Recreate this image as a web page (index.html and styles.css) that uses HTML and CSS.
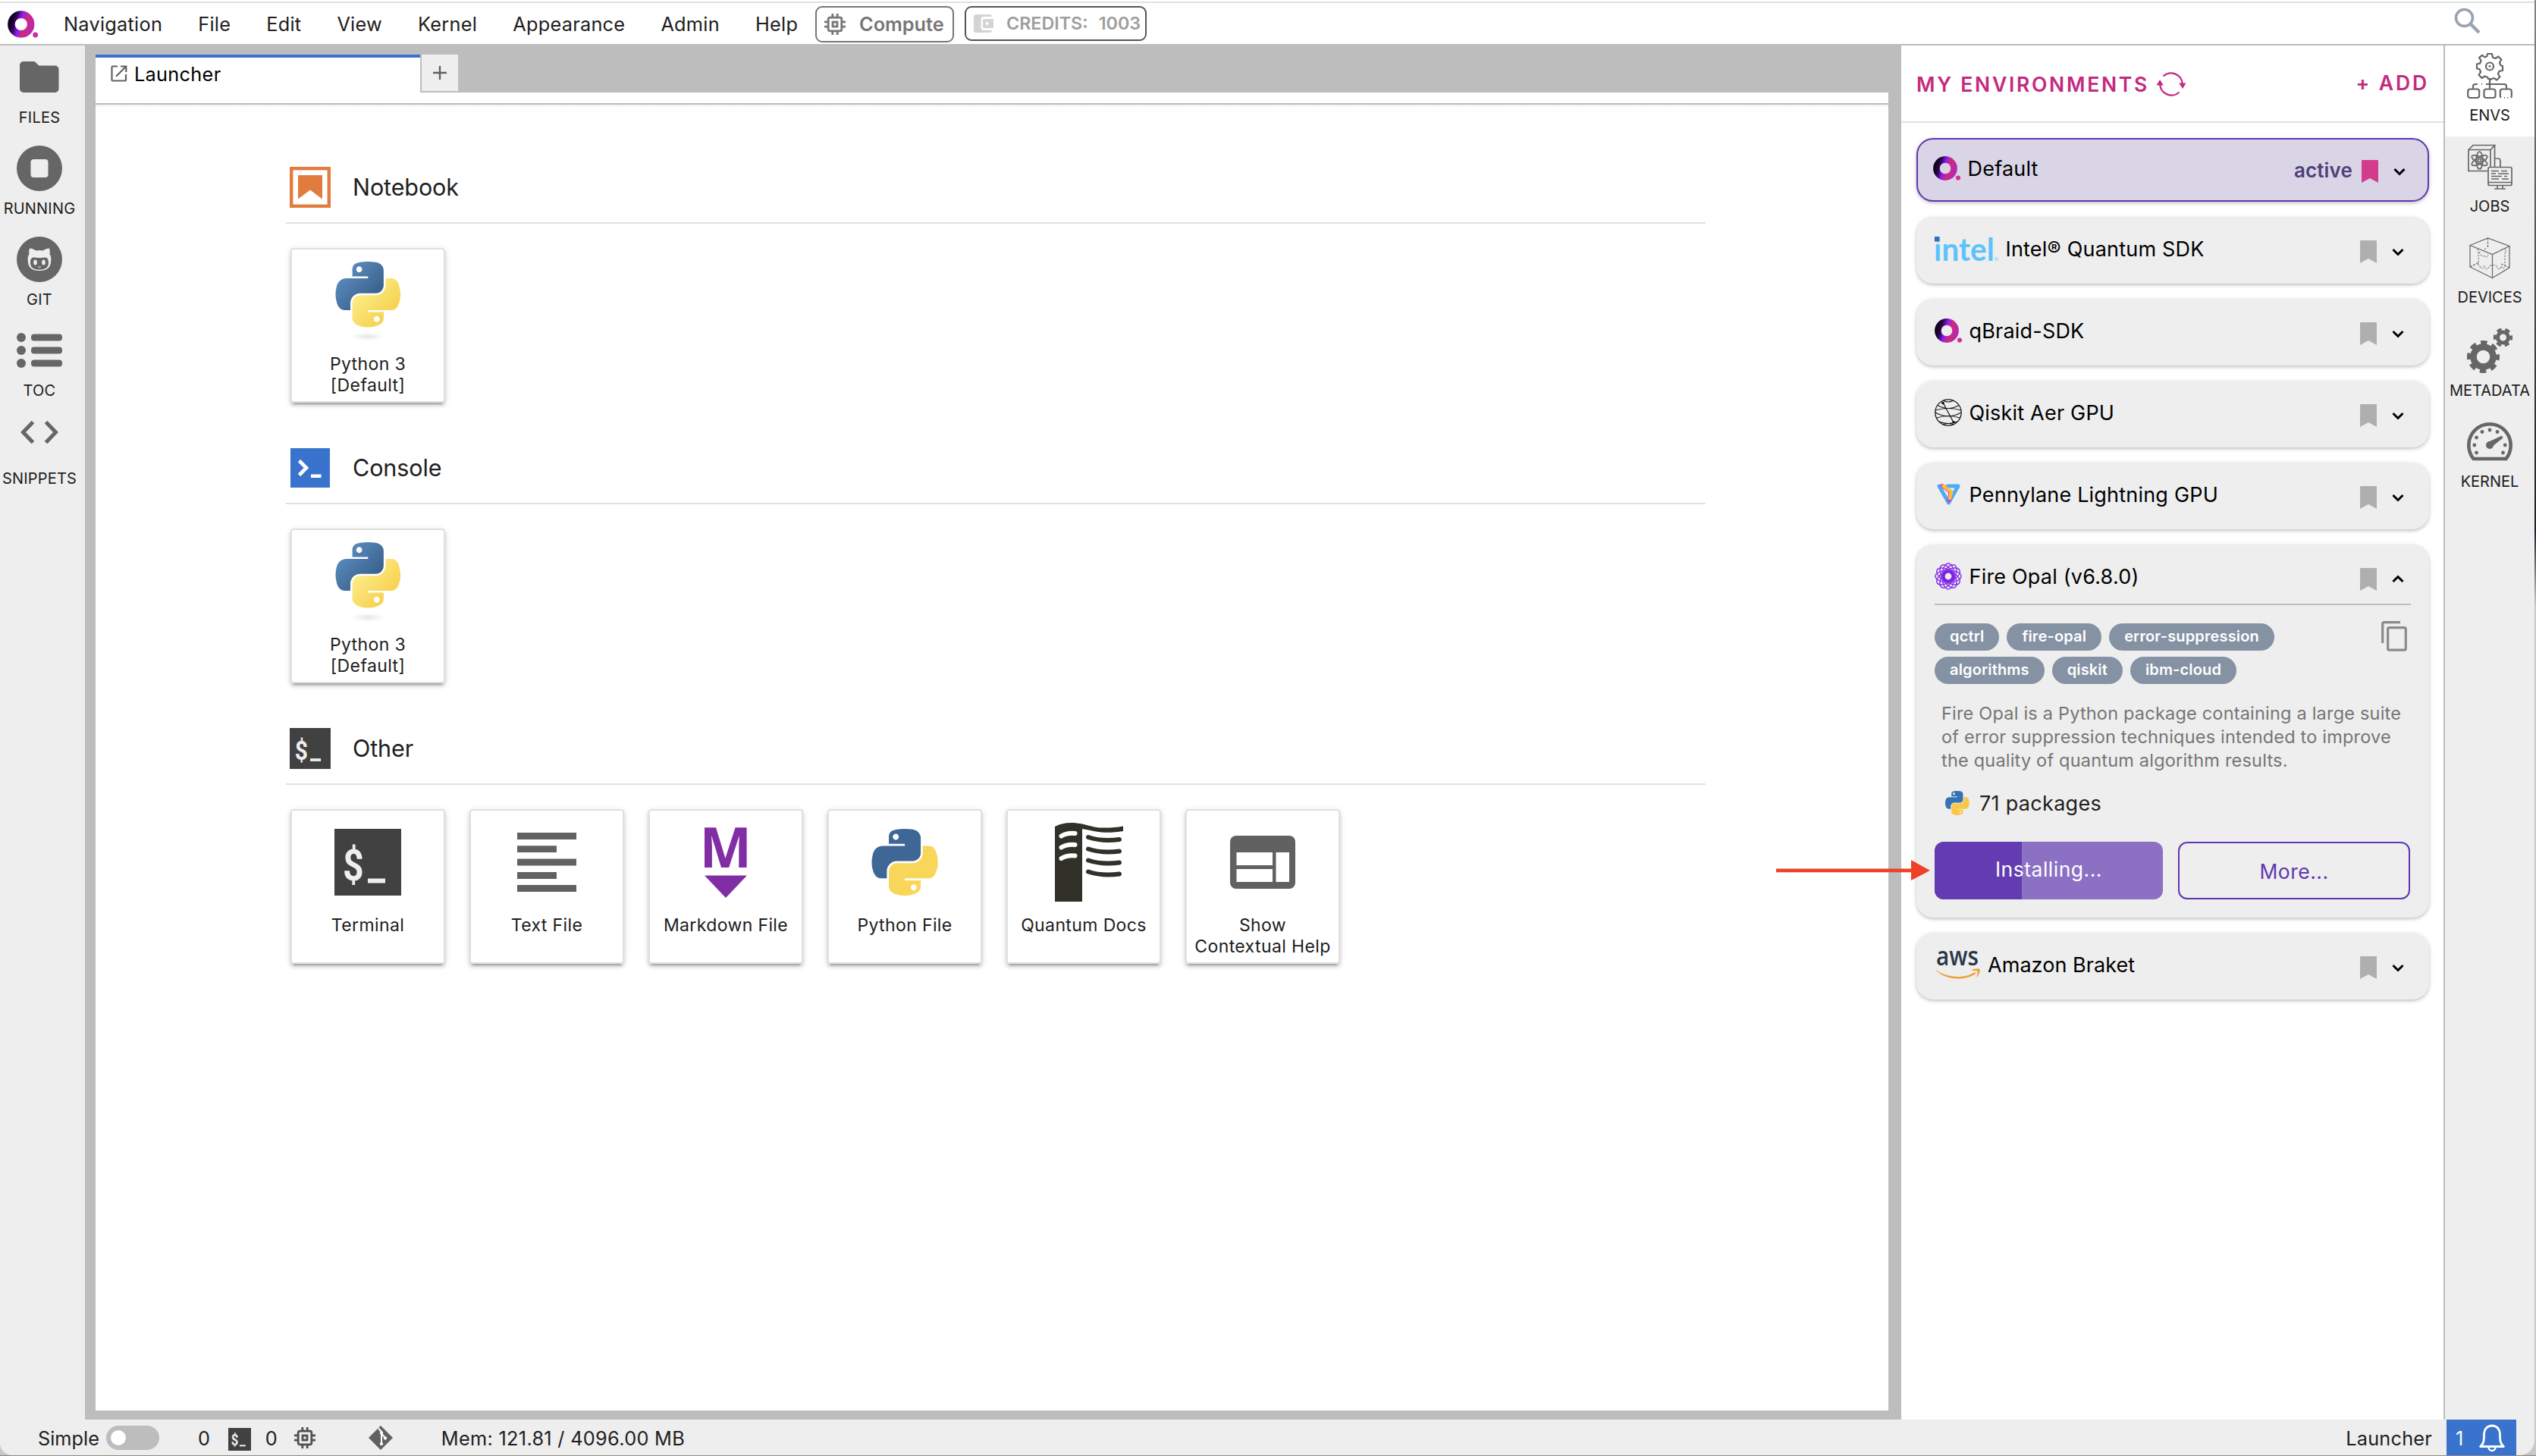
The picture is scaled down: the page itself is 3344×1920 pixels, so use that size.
FILE: index.html
```html
<!DOCTYPE html>
<html lang="en">
<head>
<meta charset="utf-8">
<title>Launcher</title>
<link rel="stylesheet" href="styles.css">
</head>
<body>
<svg class="defs" width="0" height="0" aria-hidden="true">
  <defs>
    <linearGradient id="ring" x1="0" y1="0.3" x2="1" y2="0.6">
      <stop offset="0" stop-color="#12001f"/><stop offset="0.18" stop-color="#2b0350"/><stop offset="0.45" stop-color="#8d1ff0"/><stop offset="0.72" stop-color="#d02a78"/><stop offset="1" stop-color="#bb28a8"/>
    </linearGradient>
    <linearGradient id="pyblue" x1="0" y1="0" x2="0.8" y2="0.8"><stop offset="0.1" stop-color="#5f93c6"/><stop offset="0.9" stop-color="#3d6591"/></linearGradient>
    <linearGradient id="pyyellow" x1="0.1" y1="0.2" x2="0.7" y2="0.8"><stop offset="0.2" stop-color="#fbe983"/><stop offset="1" stop-color="#f7d250"/></linearGradient>
    <radialGradient id="pyshade"><stop offset="0" stop-color="#000" stop-opacity="0.1"/><stop offset="1" stop-color="#000" stop-opacity="0"/></radialGradient>
    <path id="py-a" d="M54.919 0C50.335.022 45.958.413 42.106 1.095 30.76 3.099 28.7 7.295 28.7 15.032V25.25H55.513V28.657H18.638C10.845 28.657 4.022 33.341 1.888 42.251-.574 52.464-.683 58.837 1.888 69.5 3.793 77.439 8.345 83.095 16.138 83.095H25.356V70.845C25.356 61.995 33.013 54.188 42.106 54.188H68.888C76.342 54.188 82.294 48.05 82.294 40.563V15.032C82.294 7.766 76.164 2.307 68.888 1.095 64.282.328 59.502-.02 54.919 0ZM40.419 8.22C43.188 8.22 45.45 10.518 45.45 13.345 45.45 16.161 43.188 18.438 40.419 18.438 37.639 18.438 35.388 16.161 35.388 13.345 35.388 10.518 37.639 8.22 40.419 8.22Z"/>
    <path id="py-b" d="M85.638 28.657V40.563C85.638 49.794 77.811 57.563 68.888 57.563H42.106C34.77 57.563 28.7 63.842 28.7 71.188V96.72C28.7 103.986 35.019 108.26 42.106 110.345 50.593 112.84 58.732 113.291 68.888 110.345 75.638 108.39 82.294 104.457 82.294 96.72V86.501H55.513V83.095H95.7C103.493 83.095 106.396 77.659 109.106 69.501 111.906 61.102 111.787 53.025 109.106 42.251 107.181 34.494 103.503 28.657 95.7 28.657ZM70.575 93.313C73.354 93.313 75.606 95.591 75.606 98.407 75.606 101.234 73.354 103.532 70.575 103.532 67.806 103.532 65.544 101.234 65.544 98.407 65.544 95.591 67.806 93.313 70.575 93.313Z"/>
    <symbol id="qbraid" viewBox="0 0 36 32"><circle cx="16" cy="16" r="11.6" fill="none" stroke="url(#ring)" stroke-width="8.6"/><circle cx="33" cy="28.6" r="3.1" fill="#cf2f9c"/></symbol>
    <symbol id="chip" viewBox="0 0 28 28"><g fill="none" stroke="currentColor"><rect x="5.2" y="5.2" width="17.6" height="17.6" rx="2" stroke-width="2.8"/><rect x="11" y="11" width="6" height="6" stroke-width="2.8"/><path d="M10.8 0v5M17.2 0v5M10.8 23v5M17.2 23v5M0 10.8h5M0 17.2h5M23 10.8h5M23 17.2h5" stroke-width="2.8"/></g></symbol>
    <symbol id="terminal" viewBox="0 0 88 88"><rect width="88" height="88" fill="#414141"/><text x="11" y="68" class="dollar" textLength="28" lengthAdjust="spacingAndGlyphs">$</text><rect x="44" y="65.500" width="23" height="6" fill="#eee"/></symbol>
    <symbol id="bookmark" viewBox="0 0 22 30"><path d="M0 1a1 1 0 0 1 1-1H21a1 1 0 0 1 1 1V30L11 24 0 30Z" fill="currentColor"/></symbol>
    <symbol id="chev" viewBox="0 0 18 18"><path d="M2.500 6 9 12.500 15.500 6" fill="none" stroke="#000" stroke-width="3"/></symbol>
  </defs>
</svg>
<div class="window">
  <header class="menubar">
    <svg class="brand" width="40" height="36"><use href="#qbraid"/></svg>
    <nav class="menu">
      <span>Navigation</span><span>File</span><span>Edit</span><span>View</span><span>Kernel</span><span>Appearance</span><span>Admin</span><span>Help</span>
    </nav>
    <div class="pill compute"><svg width="28" height="28"><use href="#chip"/></svg><span>Compute</span></div>
    <div class="pill credits"><svg width="26" height="24" viewBox="0 0 26 24"><path d="M3 0H21a3 3 0 0 1 3 3H13.500a4 4 0 0 0-4 4V17a4 4 0 0 0 4 4H24a3 3 0 0 1-3 3H3a3 3 0 0 1-3-3V3a3 3 0 0 1 3-3ZM14 6H26V18H14a2 2 0 0 1-2-2V8a2 2 0 0 1 2-2Zm3.500 4a2 2 0 1 0 .1 4 2 2 0 0 0 0-4Z" fill="#d4d4d4" fill-rule="evenodd"/></svg><span>CREDITS:</span><span class="amount">1003</span></div>
    <svg class="search" width="36" height="36" viewBox="0 0 36 36"><g fill="none" stroke="#98a4b0"><circle cx="13.500" cy="13.500" r="11" stroke-width="3.6"/><path d="M21.500 21.500 33 33" stroke-width="4.4"/></g></svg>
  </header>
  <div class="workspace">
    <aside class="rail left">
      <div class="rail-item"><div class="rail-icon"><svg width="52" height="42" viewBox="0 0 52 42"><path d="M5 0H19.500L25.500 5.500H46.500a5 5 0 0 1 5 5V36a5 5 0 0 1-5 5H5a5 5 0 0 1-5-5V5a5 5 0 0 1 5-5Z" fill="#666"/></svg></div><span>FILES</span></div>
      <div class="rail-item"><div class="rail-icon"><svg width="60" height="60"><circle cx="30" cy="30" r="30" fill="#666"/><rect x="18.500" y="18" width="23" height="24" rx="4" fill="#eee"/></svg></div><span>RUNNING</span></div>
      <div class="rail-item"><div class="rail-icon"><svg width="60" height="60"><circle cx="30" cy="30" r="30" fill="#666"/><path d="M17 15.500c3 0 6.500 1.700 8.500 3q4.500-.8 9 0c2-1.300 5.500-3 8.500-3 1 3 .9 5.500.4 7.500 1.700 2.300 2.100 4.700 1.900 8C45 40 41 45 30 45S15 40 14.700 31c-.2-3.300.2-5.700 1.900-8-.5-2-.6-4.500.4-7.500Z" fill="#eee"/><path d="M24 27.500q6 1 12 0c4-.6 6 1.500 6 6.500 0 7-4 9.500-12 9.500s-12-2.500-12-9.500c0-5 2-7.100 6-6.500Z" fill="#666"/><ellipse cx="24.500" cy="34" rx="2.300" ry="3.600" fill="#eee"/><ellipse cx="35.500" cy="34" rx="2.300" ry="3.600" fill="#eee"/><path d="M28 39.500q2 2 4 0" stroke="#eee" fill="none"/></svg></div><span>GIT</span></div>
      <div class="rail-item"><div class="rail-icon"><svg width="60" height="46"><g fill="#666"><circle cx="6" cy="6" r="6"/><circle cx="6" cy="23" r="6"/><circle cx="6" cy="40" r="6"/><rect x="19" y="1.500" width="41" height="9" rx="4"/><rect x="19" y="18.500" width="41" height="9" rx="4"/><rect x="19" y="35.500" width="41" height="9" rx="4"/></g></svg></div><span>TOC</span></div>
      <div class="rail-item raised"><div class="rail-icon"><svg width="50" height="30" viewBox="0 0 50 30"><path d="M16.500 1.500 3.500 15l13 13.500M33.500 1.500 46.500 15l-13 13.500" fill="none" stroke="#666" stroke-width="5"/></svg></div><span>SNIPPETS</span></div>
    </aside>
    <main class="dock">
      <div class="tabbar">
        <div class="tab"><svg width="22" height="22" viewBox="0 0 22 22"><g fill="none" stroke="#616161" stroke-width="2.200"><path d="M9 1.500H2.500a1 1 0 0 0-1 1V19.500a1 1 0 0 0 1 1H19a1 1 0 0 0 1-1V12"/><path d="M13 1.500H20.300V9M20 1.800 7 14.800"/></g></svg><span>Launcher</span></div>
        <div class="newtab"><svg width="20" height="20"><path d="M10 1V19M1 10H19" stroke="#616161" stroke-width="2.400"/></svg></div>
      </div>
      <div class="tabfoot"></div>
      <div class="launcher">
        <section>
          <h2><svg width="54" height="54"><rect x="2.200" y="2.200" width="49.600" height="49.600" fill="#fff" stroke="#e27c3e" stroke-width="4.400"/><path d="M11 11H43V42.500L27 30.500 11 42.500Z" fill="#e27c3e"/></svg><span>Notebook</span></h2>
          <div class="cards"><div class="card"><div class="art"><svg width="88" height="112" viewBox="0 0 88 112"><g transform="translate(1.500 4) scale(.77)"><use href="#py-a" fill="url(#pyblue)"/><use href="#py-b" fill="url(#pyyellow)"/></g><ellipse cx="44" cy="103" rx="22" ry="5.500" fill="url(#pyshade)"/></svg></div><p>Python 3<br>[Default]</p></div></div>
        </section>
        <section>
          <h2><svg width="54" height="54"><rect x="1" y="1" width="52" height="52" fill="#3973cd"/><path d="M12.500 17.500 22 27l-9.500 9.500" fill="none" stroke="#fff" stroke-width="4.600"/><rect x="28" y="35.500" width="13.500" height="4.500" fill="#fff"/></svg><span>Console</span></h2>
          <div class="cards"><div class="card"><div class="art"><svg width="88" height="112" viewBox="0 0 88 112"><g transform="translate(1.500 4) scale(.77)"><use href="#py-a" fill="url(#pyblue)"/><use href="#py-b" fill="url(#pyyellow)"/></g><ellipse cx="44" cy="103" rx="22" ry="5.500" fill="url(#pyshade)"/></svg></div><p>Python 3<br>[Default]</p></div></div>
        </section>
        <section>
          <h2><svg width="54" height="54"><use href="#terminal"/></svg><span>Other</span></h2>
          <div class="cards">
            <div class="card"><div class="art"><svg width="88" height="88"><use href="#terminal"/></svg></div><p>Terminal</p></div>
            <div class="card"><div class="art"><svg width="78" height="78"><path d="M0 0H78V9H0ZM0 17.200H52V26H0ZM0 34.500H78V43.500H0ZM0 52H52V61H0ZM0 69H78V78H0Z" fill="#616161"/></svg></div><p>Text File</p></div>
            <div class="card"><div class="art"><svg width="60" height="94"><text x="-4.500" y="54" class="md" textLength="69" lengthAdjust="spacingAndGlyphs">M</text><path d="M2 64.500H58L30 94Z" fill="#812da4"/></svg></div><p>Markdown File</p></div>
            <div class="card"><div class="art"><svg width="88" height="90" viewBox="0 0 88 90"><g transform="translate(.5 1) scale(.785)"><use href="#py-a" fill="#3f6795"/><use href="#py-b" fill="#f8d65a"/></g></svg></div><p>Python File</p></div>
            <div class="card"><div class="art"><svg class="docs" width="90" height="104" viewBox="0 0 90 104"><path d="M0 5C10-1 24-1 36 1.500 48 4.500 55 7 66 6.500 75 6.500 82 6 90 4.500V11C78 13 65 13.500 54 11.500 47 10 41 9 36 8V104H0Z" fill="#31312a"/><g fill="none" stroke-linecap="round" stroke-width="6"><path stroke="#fff" d="M8.500 17.500q8-4.500 18-3.500M8.500 32.500q8-4.500 18-3.500M8.500 47q8-4.500 18-3.500"/><path stroke="#31312a" d="M44 19q18 6 41 3M44 34.500q18 6 41 3M44 49.500q18 6 41 3M44 64.500q18 6 41 3"/></g></svg></div><p>Quantum Docs</p></div>
            <div class="card"><div class="art"><svg width="86" height="70"><rect width="86" height="70" rx="8" fill="#616161"/><path d="M8.500 22H56V39H8.500ZM8.500 44H56V61H8.500ZM60.500 22H78V61H60.500Z" fill="#fff"/></svg></div><p>Show<br>Contextual Help</p></div>
          </div>
        </section>
      </div>
    </main>
    <aside class="envs">
      <div class="envs-head"><h1>MY ENVIRONMENTS</h1><svg class="refresh" width="40" height="34" viewBox="0 0 40 34"><g fill="none" stroke="#c42a80" stroke-width="2.400"><path d="M9.500 6.500A15 15 0 0 1 34.800 17M30.500 27.500A15 15 0 0 1 5.200 17"/></g><path d="M30.200 15.500H39.500L35 23ZM.500 18.500H9.800L5 11Z" fill="#c42a80"/></svg><b>+ ADD</b></div>
      <div class="env-list">
        <div class="env active"><div class="env-head"><div class="name"><svg width="36" height="32"><use href="#qbraid"/></svg><span>Default</span></div><div class="tools"><b>active</b><svg class="bm" width="22" height="30"><use href="#bookmark"/></svg><svg width="18" height="18"><use href="#chev"/></svg></div></div></div>
        <div class="env"><div class="env-head"><div class="name"><svg width="84" height="36" viewBox="0 0 84 36"><text x="-1" y="34" class="intel" textLength="80" lengthAdjust="spacingAndGlyphs">intel</text><rect width="7" height="9" fill="#eee"/><rect y="2" width="6.500" height="6.500" fill="#2f6cc4"/><circle cx="81.500" cy="31.500" r="1.800" fill="none" stroke="#5fc3f8" stroke-width=".8"/></svg><span>Intel® Quantum SDK</span></div><div class="tools"><svg class="bm" width="22" height="30"><use href="#bookmark"/></svg><svg width="18" height="18"><use href="#chev"/></svg></div></div></div>
        <div class="env"><div class="env-head"><div class="name"><svg width="36" height="32"><use href="#qbraid"/></svg><span>qBraid-SDK</span></div><div class="tools"><svg class="bm" width="22" height="30"><use href="#bookmark"/></svg><svg width="18" height="18"><use href="#chev"/></svg></div></div></div>
        <div class="env"><div class="env-head"><div class="name"><svg width="36" height="36" viewBox="0 0 36 36"><g fill="none" stroke="#111" stroke-width="1.200"><circle cx="18" cy="18" r="17.200"/><path d="M4 8.500q14 8 28 0M1 15q17 -5 34 0M1 18q17 9.500 34 0M3 25q15-5 30 0M6 30q12 5 24 0M12 2.500q6 3 12 0M11 34q7-3 14 0M11 5 25 31"/></g><circle cx="11" cy="5.500" r="1.800"/><circle cx="25" cy="30.500" r="1.600"/></svg><span>Qiskit Aer GPU</span></div><div class="tools"><svg class="bm" width="22" height="30"><use href="#bookmark"/></svg><svg width="18" height="18"><use href="#chev"/></svg></div></div></div>
        <div class="env"><div class="env-head"><div class="name"><svg width="36" height="28" viewBox="0 0 36 28"><g fill="none" stroke-linejoin="round" stroke-linecap="round"><path d="M6 3 18.500 25 31 3H17" stroke="#4dabf7" stroke-width="5"/><path d="M10 2.500 21 10.500 19 22" stroke="#d63bd0" stroke-width="5"/><path d="M11.500 3 22 10.500 20 19" stroke="#fbc02d" stroke-width="4.500"/></g></svg><span>Pennylane Lightning GPU</span></div><div class="tools"><svg class="bm" width="22" height="30"><use href="#bookmark"/></svg><svg width="18" height="18"><use href="#chev"/></svg></div></div></div>
        <div class="env open">
          <div class="env-head"><div class="name"><svg width="36" height="36" viewBox="-18 -18 36 36"><g fill="none" stroke="#8a35e8" stroke-width="1.500"><ellipse rx="17" ry="8"/><ellipse rx="17" ry="8" transform="rotate(30)"/><ellipse rx="17" ry="8" transform="rotate(60)"/><ellipse rx="17" ry="8" transform="rotate(90)"/><ellipse rx="17" ry="8" transform="rotate(120)"/><ellipse rx="17" ry="8" transform="rotate(150)"/><circle r="6.200" stroke-width="3.600" stroke="#7a22dd"/></g><circle r="3.500" fill="#eee"/></svg><span>Fire Opal (v6.8.0)</span></div><div class="tools"><svg class="bm" width="22" height="30"><use href="#bookmark"/></svg><svg class="up" width="18" height="18"><use href="#chev"/></svg></div></div>
          <div class="env-body">
            <div class="tagrow">
              <div class="tags"><span class="tag">qctrl</span><span class="tag">fire-opal</span><span class="tag">error-suppression</span><span class="tag">algorithms</span><span class="tag">qiskit</span><span class="tag">ibm-cloud</span></div>
              <svg class="copy" width="34" height="40" viewBox="0 0 34 40"><path d="M1.700 29V4a2.300 2.300 0 0 1 2.300-2.300H25" fill="none" stroke="#8a8a8a" stroke-width="3.200"/><rect x="8.700" y="8.700" width="23.600" height="29.500" rx="2" fill="none" stroke="#8a8a8a" stroke-width="3.200"/></svg>
            </div>
            <p class="desc">Fire Opal is a Python package containing a large suite<br>of error suppression techniques intended to improve<br>the quality of quantum algorithm results.</p>
            <div class="packages"><svg width="32" height="32" viewBox="0 0 112 112"><use href="#py-a" fill="#3474b4"/><use href="#py-b" fill="#fac748"/></svg><span>71 packages</span></div>
            <div class="buttons"><div class="btn solid"><i style="width:38.200%"></i><span>Installing...</span></div><div class="btn outline"><span>More...</span></div></div>
          </div>
        </div>
        <div class="env"><div class="env-head"><div class="name braket"><svg width="60" height="38" viewBox="0 0 60 38"><text x="2" y="20" class="aws" textLength="56" lengthAdjust="spacingAndGlyphs">aws</text><path d="M0 25C16 37 39 38 53 29L54.500 31C39 41 14 40 0 25Z" fill="#f29d38"/><path d="M48 26.500C52 24 58 23.500 59.500 25 60.500 27.500 58.500 33 55.500 36 56 32 57 29.500 56.500 27.800 55 26.800 51 27 48 26.500Z" fill="#f29d38"/></svg><span>Amazon Braket</span></div><div class="tools"><svg class="bm" width="22" height="30"><use href="#bookmark"/></svg><svg width="18" height="18"><use href="#chev"/></svg></div></div></div>
      </div>
    </aside>
    <aside class="rail right">
      <div class="rail-item selected raised"><div class="rail-icon"><svg width="60" height="60" viewBox="0 0 60 60"><g fill="none" stroke="#666" stroke-width="2.200"><path d="M27 1h6l.8 4.500 3.700 1.600L41.300 4.500l4.200 4.200-2.600 3.800 1.600 3.700L47 17v6l-4.500.8-1.600 3.700 2.600 3.800-4.200 4.200-3.800-2.600-3.700 1.600L32 34h-4l-.8-2-3.700-1.600-3.800 2.600-4.200-4.200 2.600-3.800L16.500 21 13 20.500v-6l4-.8 1.600-3.700-2.600-3.800L20 2.800l3.500 2.600 2.700-1.200Z" stroke-linejoin="round"/><circle cx="30" cy="17.500" r="5"/><path d="M30 34V47M8 47v-3a3 3 0 0 1 3-3h3M19 41h1M25 41H49a3 3 0 0 1 3 3v3"/><rect x="1.200" y="47.500" width="15" height="11.500" rx="3"/><rect x="22.500" y="47.500" width="15" height="11.500" rx="3"/><path d="M45 58.500a2 2 0 0 1-1.200-2V50.500a3 3 0 0 1 3-3h9a3 3 0 0 1 3 3v6a2 2 0 0 1-1.200 2M49 59h1M53 59h1"/></g><circle cx="30" cy="17.500" r="1.400" fill="#666"/></svg></div><span>ENVS</span></div>
      <div class="rail-item raised"><div class="rail-icon"><svg width="60" height="60" viewBox="0 0 60 60"><g fill="none" stroke="#666" stroke-width="1.700"><path d="M27 35.500H2V7.500H31V30M2 7.500 8 1.500H36.500L31 7.500M36.500 1.500V30M36 19h5a3 3 0 0 1 3 3v8"/><ellipse cx="16.500" cy="21.500" rx="11.500" ry="4.300" transform="rotate(30 16.500 21.500)"/><ellipse cx="16.500" cy="21.500" rx="11.500" ry="4.300" transform="rotate(90 16.500 21.500)"/><ellipse cx="16.500" cy="21.500" rx="11.500" ry="4.300" transform="rotate(150 16.500 21.500)"/><circle cx="16.500" cy="21.500" r="2.200"/><rect x="28" y="30.500" width="31" height="24" rx="2"/><path d="M28 50.500H59M40 54.500v4M47 54.500v4M36 59H51M32 35.500H42M45 35.500H53M32 39H38M41 39H55M32 42.500H46M49 42.500H53M32 46H42M46 46H55"/></g></svg></div><span>JOBS</span></div>
      <div class="rail-item raised"><div class="rail-icon"><svg width="54" height="54" viewBox="0 0 54 54"><g fill="none" stroke="#666" stroke-width="1.200"><path d="M1 10.500 24.500 1 53 11.500 30.500 22.500ZM1 10.500V39L30.500 53.500V22.500M53 11.500V40L30.500 53.500"/><path d="M24.500 1V14M1 39 13 33M53 40 42 35" stroke-dasharray="3 1.500"/><path d="M11 15q2 10 1 23M13 19q3 8 8 5 2 4 4-1M14 38q2 6 6 0 3 8 6 0 8-3 10 0 3 8 6 0 3 6 5 0V20M42 16l6-1v6M20 16l3-2" stroke-dasharray="2.500 1.500" stroke="#888"/></g></svg></div><span>DEVICES</span></div>
      <div class="rail-item"><div class="rail-icon"><svg width="60" height="60" viewBox="0 0 60 60"><g fill="none" stroke="#666"><circle cx="21.500" cy="38.500" r="13" stroke-width="8.500"/><circle cx="21.500" cy="38.500" r="19" stroke-width="5" stroke-dasharray="8.500 6.423" stroke-dashoffset="4"/><circle cx="47.500" cy="13" r="7" stroke-width="5"/><circle cx="47.500" cy="13" r="10.800" stroke-width="3.600" stroke-dasharray="6.300 5.010" stroke-dashoffset="3"/></g></svg></div><span>METADATA</span></div>
      <div class="rail-item"><div class="rail-icon"><svg width="60" height="50" viewBox="0 0 60 50"><path d="M8.500 48C4.500 43 2.300 37 2.300 30a27.700 27.700 0 0 1 55.400 0C57.700 37 55.500 43 51.500 48Z" fill="none" stroke="#666" stroke-width="4.600" stroke-linejoin="round"/><path d="M26.500 26.500 46 17.500l1.500 3L33 32Z" fill="#666"/><g fill="#666"><circle cx="30" cy="30" r="5"/><circle cx="30" cy="10" r="2.400"/><circle cx="20" cy="12.500" r="2.400"/><circle cx="40" cy="12.500" r="2.400"/><circle cx="12.500" cy="20" r="2.400"/><circle cx="9.800" cy="30" r="2.400"/><circle cx="50.200" cy="30" r="2.400"/><circle cx="12.500" cy="40" r="2.400"/><circle cx="47.500" cy="40" r="2.400"/></g></svg></div><span>KERNEL</span></div>
    </aside>
  </div>
  <footer class="status">
    <span>Simple</span><i class="toggle"></i>
    <span class="n1">0</span><svg class="term" width="30" height="30"><use href="#terminal"/></svg><span class="n2">0</span>
    <svg class="chip" width="28" height="28"><use href="#chip"/></svg>
    <svg class="git" width="32" height="32" viewBox="0 0 32 32"><path d="M16 0 32 16 16 32 0 16Z" fill="#616161"/><g stroke="#fff" fill="#fff"><path d="M13 3.500 17 8V24M17 10.500 22 16" stroke-width="2" fill="none"/><circle cx="17" cy="9.500" r="1.700"/><circle cx="22" cy="16.500" r="1.700"/><circle cx="17" cy="24" r="1.700"/></g></svg>
    <span class="mem">Mem: 121.81 / 4096.00 MB</span>
    <span class="current">Launcher</span>
    <div class="bell"><span>1</span><svg width="34" height="36" viewBox="0 0 34 36"><path d="M1.500 29.500C6 26 6.500 22 6.500 14.500 6.500 6 11 2 17 2S27.500 6 27.500 14.500C27.500 22 28 26 32.500 29.500Z" fill="none" stroke="#fff" stroke-width="2.800" stroke-linejoin="round"/><path d="M12.500 30.500a4.500 4.500 0 0 0 9 0" fill="none" stroke="#fff" stroke-width="2.400"/></svg></div>
  </footer>
  <svg class="pointer" width="204" height="28" viewBox="0 0 204 28"><path d="M0 11.500H178V0L203 13.800 178 27V16.300H0Z" fill="#ee4126"/></svg>
</div>
</body>
</html>
```
FILE: styles.css
```css
* { box-sizing: border-box; }
body { margin: 0; background: linear-gradient(#8a8478 0, #3a3a34 500px, #1a2230 700px, #c9c9c9 800px, #c9c9c9 100%); font-family: Inter, "Liberation Sans", sans-serif; font-size: 25.300px; color: #202020; }
h1, h2, p { margin: 0; font-weight: 400; }
svg { display: block; flex: none; overflow: visible; }
span, b { white-space: nowrap; }
.defs { position: absolute; }
.window { position: relative; width: 3342px; height: 1919px; display: flex; flex-direction: column; background: #eee; border-radius: 0 0 20px 16px; overflow: hidden; }
.dollar { font: 700 58px Roboto, sans-serif; fill: #eee; }
.md { font: 700 73px "Open Sans", sans-serif; fill: #812da4; }
.intel { font: 700 42px Lato, sans-serif; fill: #5bc3fa; }
.aws { font: 600 35px "Open Sans", sans-serif; fill: #2b3648; }

.menubar { height: 60px; flex: none; display: flex; align-items: center; background: linear-gradient(#fff 2px, #e0e0e0 2px, #e0e0e0 4px, #fff 4px); border-bottom: 2px solid #bdbdbd; padding: 5px 70px 0 10px; }
.menu { display: flex; gap: 47px; margin-left: 34px; width: 990px; flex: none; letter-spacing: .27px; }
.pill { display: flex; align-items: center; border: 2px solid #767676; border-radius: 9px; height: 48px; width: 183px; padding-left: 10px; gap: 18px; color: #767676; font-weight: 600; margin-left: 1px; }
.credits { height: 46px; width: 240px; margin: -1px 0 0 14px; border-color: #555; color: #9e9e9e; gap: 17px; font-size: 23.300px; }
.credits span { margin-top: -1px; }
.credits .amount { margin-left: -3px; }
.search { margin: -8px 0 0 auto; }

.workspace { height: 1812px; flex: none; display: flex; }
.rail { flex: none; background: #eee; font-size: 20px; }
.left { width: 112px; letter-spacing: .2px; }
.right { width: 120px; border-left: 2px solid #bdbdbd; }
.rail-item { height: 120px; display: flex; flex-direction: column; align-items: center; padding-top: 12px; }
.left .rail-item { padding-right: 8px; }
.rail-icon { width: 60px; height: 60px; display: flex; align-items: center; justify-content: center; margin-bottom: 11px; }
.rail-item span { line-height: 24px; }
.right .raised { padding-top: 10px; }
.right .raised .rail-icon { margin-bottom: 10px; }
.left .raised { padding-top: 0; }
.left .raised .rail-icon { margin-bottom: 19px; }
.selected { background: #fff; }

.dock { width: 2395px; flex: none; background: #bdbdbd; padding: 12px 17px 12px 14px; display: flex; flex-direction: column; }
.tabbar { height: 50px; display: flex; flex: none; }
.tab { width: 428px; background: #fff; border-top: 4px solid #3973cd; display: flex; align-items: flex-start; gap: 9px; padding: 10px 0 0 20px; color: #000; line-height: 24px; letter-spacing: .3px; }
.newtab { width: 50px; height: 50px; background: #eee; border: solid #bdbdbd; border-width: 0 0 2px 2px; display: flex; align-items: center; justify-content: center; }
.tabfoot { height: 16px; flex: none; background: #fff; border-bottom: 2px solid #bdbdbd; }
.launcher { flex: 1; background: linear-gradient(#f0f0f0, #fff 4px); padding: 63px 241px 0 251px; }
section { height: 370px; }
h2 { height: 94px; border-bottom: 2px solid #e0e0e0; display: flex; align-items: center; gap: 29px; padding-left: 5px; font-size: 30.500px; line-height: 36px; letter-spacing: -.1px; }
.cards { display: flex; gap: 32px; padding: 32px 0 0 6px; }
.card { width: 204px; height: 204px; border: 2px solid #e0e0e0; border-radius: 4px; background: #fff; box-shadow: 0 6px 2px -4px rgba(0,0,0,.2), 0 4px 4px 0 rgba(0,0,0,.14), 0 2px 10px 0 rgba(0,0,0,.12); text-align: center; font-size: 23px; line-height: 28px; letter-spacing: .38px; }
.art { height: 136px; display: flex; align-items: center; justify-content: center; margin-bottom: 1px; }
.docs { margin-left: 14px; }

.envs { width: 715px; flex: none; background: #fff; }
.envs-head { height: 102px; border-bottom: 2px solid #e0e0e0; display: flex; align-items: center; padding: 2px 19px 0 20px; color: #c42a80; }
.envs-head h1 { font-size: 26.500px; font-weight: 600; letter-spacing: 2.740px; margin-top: -1px; }
.envs-head b { font-size: 26.500px; font-weight: 600; letter-spacing: 2.900px; margin: -5px 0 0 auto; }
.refresh { margin-left: 9px; }
.env-list { display: flex; flex-direction: column; gap: 20px; padding: 20px 19px 0 20px; }
.env { border-radius: 22px; background: #eee; box-shadow: 0 2px 4px rgba(0,0,0,.2), 0 1px 8px rgba(0,0,0,.06); font-size: 27px; color: #000; }
.env-head { height: 88px; display: flex; justify-content: space-between; padding: 0 32px 0 24px; }
.name { display: flex; align-items: center; gap: 9.500px; margin-bottom: 4px; letter-spacing: .2px; }
.braket { gap: 10px; letter-spacing: .05px; }
.tools { display: flex; align-items: center; gap: 19px; margin-top: 4px; color: #afafaf; }
.up { transform: scaleY(-1); }
.active { background: #d9d4e6; border: 2px solid #5f38b0; }
.active .env-head { height: 80px; padding: 0 28px 0 20px; }
.active b { color: #4f3f78; font-weight: 600; font-size: 26px; letter-spacing: .15px; margin: -3px -7px 0 0; }
.active .bm { color: #d23c8b; }
.env-body { height: 414px; margin: -10px 24px 0; border-top: 2px solid #bdbdbd; padding-top: 23px; }
.tagrow { display: flex; justify-content: space-between; align-items: flex-start; padding-right: 5px; }
.copy { margin-top: -2px; }
.tags { display: flex; flex-wrap: wrap; gap: 8px 10px; width: 460px; margin-top: 1px; }
.tag { height: 36px; line-height: 34px; border-radius: 18px; background: #8492a4; color: #fff; font-size: 20px; font-weight: 600; letter-spacing: .15px; padding: 0 20px; }
.desc { margin: 23px 0 0 9px; font-size: 23.500px; line-height: 31px; letter-spacing: .2px; color: #757575; }
.packages { display: flex; align-items: center; gap: 13px; margin: 24px 0 0 14px; height: 34px; color: #202020; letter-spacing: .3px; }
.buttons { display: flex; gap: 20px; margin-top: 34px; }
.btn { height: 76px; border-radius: 12px; display: flex; align-items: center; justify-content: center; font-size: 26.500px; letter-spacing: .5px; }
.solid { position: relative; width: 301px; background: #8b70c3; color: #fff; overflow: hidden; padding-bottom: 4px; }
.solid i { position: absolute; left: 0; top: 0; bottom: 0; background: #623cb0; }
.solid span { position: relative; }
.outline { width: 306px; border: 2px solid #5e37b0; color: #5e37b0; padding-top: 1px; }

.status { flex: 1; display: flex; align-items: center; padding: 0 0 0 50px; }
.toggle { width: 70px; height: 32px; border-radius: 16px; background: #bdbdbd; padding: 6px; margin-left: 9px; }
.toggle::before { content: ""; display: block; width: 20px; height: 20px; border-radius: 50%; background: #fff; }
.n1 { margin-left: 51px; }
.term { margin-left: 24px; margin-top: 4px; }
.n2 { margin-left: 19px; }
.chip { margin-left: 22px; color: #505050; }
.git { margin-left: 70px; }
.mem { margin-left: 64px; letter-spacing: .3px; }
.current { margin-left: auto; margin-right: 19px; letter-spacing: .2px; }
.bell { width: 92px; height: 48px; background: #3973cd; color: #fff; margin-right: 24px; display: flex; align-items: center; justify-content: space-between; padding: 0 15px 0 12px; }
.pointer { position: absolute; left: 2342px; top: 1134px; }
```
